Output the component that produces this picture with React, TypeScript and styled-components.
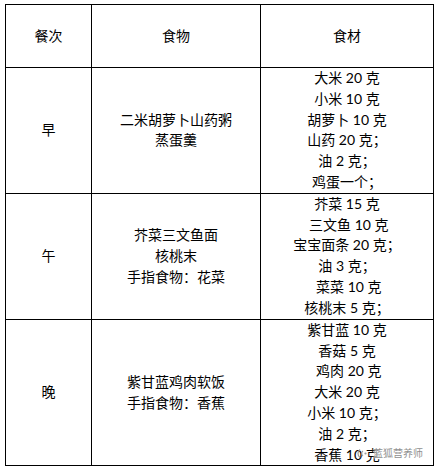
import React from "react";
import styled, { createGlobalStyle } from "styled-components";

const Global = createGlobalStyle`
  html, body { margin: 0; padding: 0; background: #fff; }
  body {
    font-family: "Lato", "Noto Sans CJK SC", sans-serif;
    color: #000;
  }
`;

const Page = styled.div`
  width: 435px;
  height: 469px;
  padding: 4px 0 0 5px;
  box-sizing: border-box;
  position: relative;
  overflow: hidden;
`;

const Table = styled.table`
  border-collapse: collapse;
  table-layout: fixed;
  width: 425px;
  font-size: 14px;
  line-height: 20.8px;
`;

const Row = styled.tr<{ $h: number }>`
  height: ${(p) => p.$h}px;
`;

const Cell = styled.td<{ $w?: number }>`
  border: 1px solid #000;
  padding: 0;
  text-align: center;
  vertical-align: middle;
  ${(p) => (p.$w ? `width: ${p.$w}px;` : "")}
`;

const IngCell = styled(Cell)`
  vertical-align: top;
`;

const Line = styled.div`
  white-space: pre;
`;

const Watermark = styled.div`
  position: absolute;
  left: 357px;
  top: 446px;
  display: flex;
  align-items: center;
  gap: 3px;
  font-family: "Noto Sans CJK SC", sans-serif;
  font-size: 10px;
  line-height: 14px;
  color: #8f8f8f;
  text-shadow: 0 0 2px #fff, 0 0 2px #fff;
`;

const rows = [
  {
    meal: "早",
    h: 125,
    food: ["二米胡萝卜山药粥", "蒸蛋羹"],
    ing: ["大米 20 克", "小米 10 克", "胡萝卜 10 克", "山药 20 克；", "油 2 克；", "鸡蛋一个；"],
  },
  {
    meal: "午",
    h: 126,
    food: ["芥菜三文鱼面", "核桃末", "手指食物：花菜"],
    ing: ["芥菜 15 克", " 三文鱼 10 克", "宝宝面条 20 克；", "油 3 克；", " 菜菜 10 克", "核桃末 5 克；"],
  },
  {
    meal: "晚",
    h: 146,
    food: ["紫甘蓝鸡肉软饭", "手指食物：香蕉"],
    ing: ["紫甘蓝 10 克", "香菇 5 克", " 鸡肉 20 克", "大米 20 克", "小米 10 克；", "油 2 克；", "香蕉 10 克"],
  },
];

export default function App() {
  return (
    <>
      <Global />
      <Page>
        <Table>
          <tbody>
            <Row $h={63}>
              <Cell $w={85}>餐次</Cell>
              <Cell $w={168}>食物</Cell>
              <Cell $w={172}>食材</Cell>
            </Row>
            {rows.map((r) => (
              <Row key={r.meal} $h={r.h}>
                <Cell>{r.meal}</Cell>
                <Cell>
                  {r.food.map((f) => (
                    <Line key={f}>{f}</Line>
                  ))}
                </Cell>
                <IngCell>
                  {r.ing.map((f) => (
                    <Line key={f}>{f}</Line>
                  ))}
                </IngCell>
              </Row>
            ))}
          </tbody>
        </Table>
        <Watermark>
          <svg width="13" height="13" viewBox="0 0 13 13">
            <path d="M3 2.5 A5 5 0 0 0 3 10.5" fill="none" stroke="#9a9a9a" strokeWidth="1.2" />
            <path d="M6 4 A3 3 0 0 0 6 9" fill="none" stroke="#9a9a9a" strokeWidth="1.2" />
            <circle cx="8.5" cy="6.5" r="1.1" fill="#9a9a9a" />
          </svg>
          <span>蓝狐营养师</span>
        </Watermark>
      </Page>
    </>
  );
}
